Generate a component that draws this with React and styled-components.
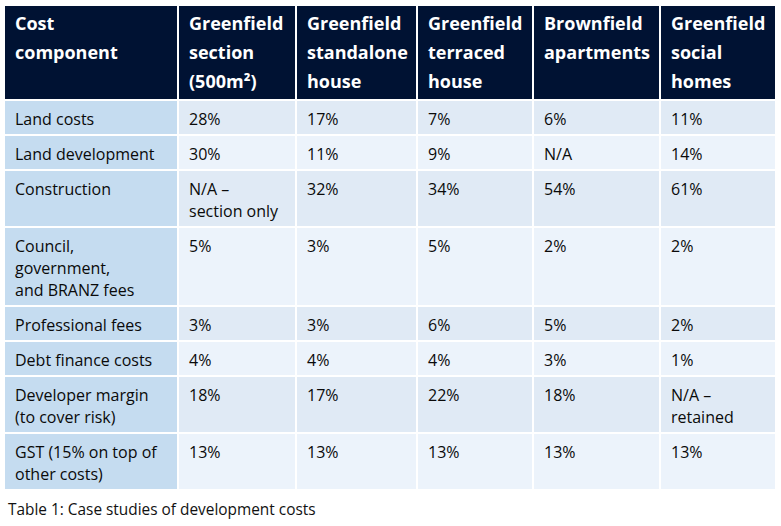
import React from "react";
import styled, { createGlobalStyle } from "styled-components";

const GlobalStyle = createGlobalStyle`
  body {
    margin: 0;
    background: #fff;
    font-family: "Open Sans", "Noto Sans", sans-serif;
    color: #111;
  }
`;

const Page = styled.div`
  padding: 6px 6px 0 5px;
`;

const Grid = styled.div`
  display: grid;
  grid-template-columns: 172px 116px 119px 114px 125px 114px;
  gap: 2px;
  background: #fff;
`;

const HeadCell = styled.div`
  background: #001233;
  color: #fff;
  font-weight: 700;
  font-size: 18px;
  line-height: 29px;
  padding: 3px 10px;
  min-height: 87px;
`;

const Cell = styled.div`
  background: ${(p) => (p.$label ? "#c5dcf0" : p.$odd ? "#e0eaf5" : "#ecf3fb")};
  font-size: 16px;
  line-height: 22px;
  padding: 7px 10px 4px 10px;
  color: #0a0a0a;
`;

const Caption = styled.div`
  font-size: 15.4px;
  line-height: 22px;
  padding: 10px 0 0 3px;
  color: #111;
`;

const headLines = [
  ["Cost", "component"],
  ["Greenfield", "section", "(500m²)"],
  ["Greenfield", "standalone", "house"],
  ["Greenfield", "terraced", "house"],
  ["Brownfield", "apartments"],
  ["Greenfield", "social", "homes"],
];

const rows = [
  [["Land costs"], ["28%"], ["17%"], ["7%"], ["6%"], ["11%"]],
  [["Land development"], ["30%"], ["11%"], ["9%"], ["N/A"], ["14%"]],
  [["Construction"], ["N/A –", "section only"], ["32%"], ["34%"], ["54%"], ["61%"]],
  [["Council,", "government,", "and BRANZ fees"], ["5%"], ["3%"], ["5%"], ["2%"], ["2%"]],
  [["Professional fees"], ["3%"], ["3%"], ["6%"], ["5%"], ["2%"]],
  [["Debt finance costs"], ["4%"], ["4%"], ["4%"], ["3%"], ["1%"]],
  [["Developer margin", "(to cover risk)"], ["18%"], ["17%"], ["22%"], ["18%"], ["N/A –", "retained"]],
  [["GST (15% on top of", "other costs)"], ["13%"], ["13%"], ["13%"], ["13%"], ["13%"]],
];

const Lines = ({ lines }) =>
  lines.map((l, i) => (
    <React.Fragment key={i}>
      {l}
      {i < lines.length - 1 && <br />}
    </React.Fragment>
  ));

export default function App() {
  return (
    <Page>
      <GlobalStyle />
      <Grid>
        {headLines.map((h, i) => (
          <HeadCell key={i}>
            <Lines lines={h} />
          </HeadCell>
        ))}
        {rows.map((row, r) =>
          row.map((c, ci) => (
            <Cell key={`${r}-${ci}`} $label={ci === 0} $odd={r % 2 === 0}>
              <Lines lines={c} />
            </Cell>
          ))
        )}
      </Grid>
      <Caption>Table 1: Case studies of development costs</Caption>
    </Page>
  );
}
